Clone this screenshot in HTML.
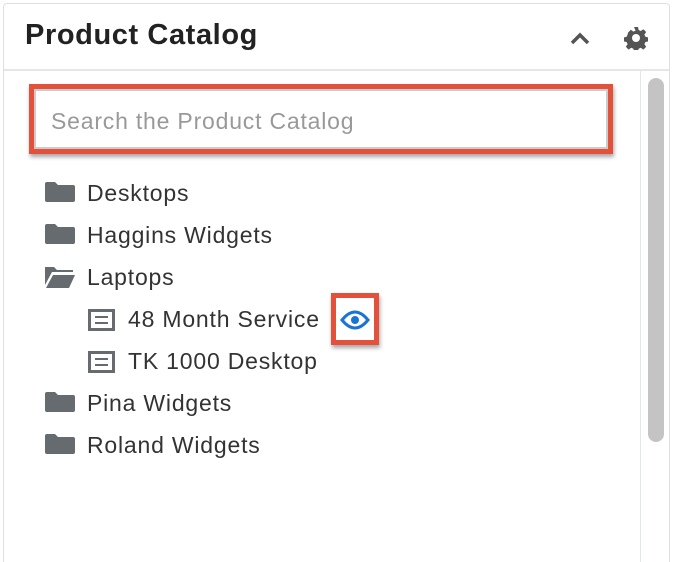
<!DOCTYPE html>
<html><head><style>
html,body{margin:0;width:674px;height:562px;overflow:hidden}
body{background:#fff;font-family:"Liberation Sans",sans-serif;position:relative}
.panel{position:absolute;left:3px;top:3px;width:667px;height:559px;border:1px solid #dde0e3;border-bottom:none;border-radius:4px 4px 0 0;box-sizing:border-box}
.title{position:absolute;left:25px;top:19px;font-size:29px;font-weight:bold;color:#222;letter-spacing:0.6px}
.hline{position:absolute;left:4px;top:69px;width:665px;height:2px;background:#e4e6e8}
.vline{position:absolute;left:640px;top:71px;width:1px;height:491px;background:#e4e6e8}
.thumb{position:absolute;left:648px;top:78px;width:16px;height:364px;background:#c4c4c4;border-radius:8px}
.search{position:absolute;left:29px;top:84px;width:584px;height:70px;border:5px solid #e4513a;box-sizing:border-box;box-shadow:1px 3px 4px rgba(0,0,0,.35)}
.search .in{position:absolute;inset:0;border:2px solid #ccc;}
.search span{position:absolute;left:17px;top:19px;font-size:23px;color:#999;letter-spacing:0.8px}
.row{position:absolute;font-size:23px;color:#333;height:30px;line-height:30px;letter-spacing:0.8px}
.fold{position:absolute;width:32px;height:22px}
.eye{position:absolute;left:331px;top:293px;width:48px;height:52px;border:5px solid #e4513a;box-sizing:border-box;box-shadow:1px 3px 4px rgba(0,0,0,.35);background:#fff}
</style></head><body>
<div class="panel"></div>
<div class="title">Product Catalog</div>
<svg style="position:absolute;left:569px;top:30px" width="22" height="16" viewBox="0 0 22 16"><path d="M3 13 L11 5 L19 13" fill="none" stroke="#555" stroke-width="3.5"/></svg>
<svg style="position:absolute;left:624px;top:26px" width="24" height="24" viewBox="0 0 24 24"><path fill="#555" d="M10 1h4l.6 3 2.2 1 2.6-1.8 2.8 2.8-1.8 2.6 1 2.2 3 .6v4l-3 .6-1 2.2 1.8 2.6-2.8 2.8-2.6-1.8-2.2 1-.6 3h-4l-.6-3-2.2-1-2.6 1.8-2.8-2.8 1.8-2.6-1-2.2-3-.6v-4l3-.6 1-2.2L4 6.6 6.8 3.8 9.4 5.6l2.2-1z"/><circle cx="12" cy="12" r="4" fill="#fff"/></svg>
<div class="hline"></div>
<div class="vline"></div>
<div class="thumb"></div>
<div class="search"><div class="in"></div><span>Search the Product Catalog</span></div>

<svg class="fold" style="left:44px;top:181px" viewBox="0 0 32 22"><path d="M1 3q0-2 2-2h8l3 3h15q2 0 2 2v13q0 2-2 2H3q-2 0-2-2z" fill="#666b70"/></svg>
<div class="row" style="left:87px;top:178px">Desktops</div>
<svg class="fold" style="left:44px;top:223px" viewBox="0 0 32 22"><path d="M1 3q0-2 2-2h8l3 3h15q2 0 2 2v13q0 2-2 2H3q-2 0-2-2z" fill="#666b70"/></svg>
<div class="row" style="left:87px;top:220px">Haggins Widgets</div>
<svg class="fold" style="left:44px;top:265px;height:24px" viewBox="0 0 32 24"><path d="M1 2h9l3 3h16v2H8L1 20z" fill="#666b70"/><path d="M9 10h22l-6 13H2z" fill="#666b70"/></svg>
<div class="row" style="left:87px;top:262px">Laptops</div>
<svg style="position:absolute;left:88px;top:309px" width="27" height="22" viewBox="0 0 27 22"><rect x="1.5" y="1.5" width="24" height="19" fill="none" stroke="#666b70" stroke-width="3"/><rect x="7" y="7" width="13" height="2" fill="#666b70"/><rect x="7" y="13" width="13" height="2" fill="#666b70"/></svg>
<div class="row" style="left:128px;top:304px">48 Month Service</div>
<div class="eye"><svg style="position:absolute;left:4px;top:8px" width="30" height="28" viewBox="0 0 30 28"><path d="M2 14 Q15 -2 28 14 Q15 30 2 14Z" fill="none" stroke="#1a74d6" stroke-width="3"/><circle cx="15" cy="14" r="4" fill="#1a74d6"/></svg></div>
<svg style="position:absolute;left:88px;top:351px" width="27" height="22" viewBox="0 0 27 22"><rect x="1.5" y="1.5" width="24" height="19" fill="none" stroke="#666b70" stroke-width="3"/><rect x="7" y="7" width="13" height="2" fill="#666b70"/><rect x="7" y="13" width="13" height="2" fill="#666b70"/></svg>
<div class="row" style="left:128px;top:346px">TK 1000 Desktop</div>
<svg class="fold" style="left:44px;top:391px" viewBox="0 0 32 22"><path d="M1 3q0-2 2-2h8l3 3h15q2 0 2 2v13q0 2-2 2H3q-2 0-2-2z" fill="#666b70"/></svg>
<div class="row" style="left:87px;top:388px">Pina Widgets</div>
<svg class="fold" style="left:44px;top:433px" viewBox="0 0 32 22"><path d="M1 3q0-2 2-2h8l3 3h15q2 0 2 2v13q0 2-2 2H3q-2 0-2-2z" fill="#666b70"/></svg>
<div class="row" style="left:87px;top:430px">Roland Widgets</div>
</body></html>
